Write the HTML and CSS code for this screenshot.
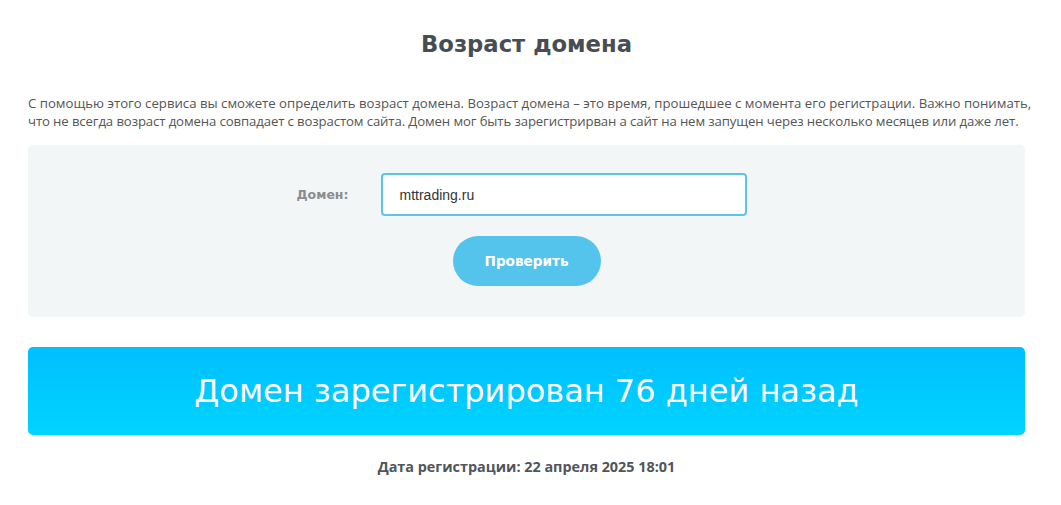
FILE: index.html
```html
<!DOCTYPE html>
<html lang="ru">
<head>
    <meta charset="UTF-8">
    <title>Возраст домена</title>
    <link rel="stylesheet" href="styles.css">
</head>
<body>
<div class="page">
    <h1 class="title">Возраст домена</h1>
    <p class="intro">С помощью этого сервиса вы сможете определить возраст домена. Возраст домена – это время, прошедшее с момента его регистрации. Важно понимать,<br><span class="tight">что не всегда возраст домена совпадает с возрастом сайта. Домен мог быть зарегистрирван а сайт на нем запущен через несколько месяцев или даже лет.</span></p>
    <form class="check" onsubmit="return false;">
        <div class="row">
            <label class="label" for="domain">Домен:</label>
            <input class="field" type="text" id="domain" value="mttrading.ru">
        </div>
        <button class="btn" type="submit">Проверить</button>
    </form>
    <div class="result">Домен зарегистрирован 76 дней назад</div>
    <div class="date">Дата регистрации: 22 апреля 2025 18:01</div>
</div>
</body>
</html>
```

FILE: styles.css
```css
body{
    margin:0;
    background:#fff;
    font-family:"Open Sans","DejaVu Sans",sans-serif;
    color:#4a4f55;
}
.page{
    width:997px;
    margin-left:28px;
    padding-top:28px;
}
.title{
    margin:0;
    text-align:center;
    font-family:"DejaVu Sans",sans-serif;
    font-size:22.7px;
    line-height:32px;
    font-weight:bold;
    color:#484d53;
}
.intro{
    margin:34px 0 0;
    font-size:13.2px;
    line-height:18px;
    color:#555;
    white-space:nowrap;
}
/* вторая строка в оригинале чуть уже */
.intro .tight{
    letter-spacing:-0.12px;
}
.check{
    margin-top:15px;
    background:#f3f6f7;
    border-radius:5px;
    padding:28px 0 31px;
    display:flex;
    flex-direction:column;
    align-items:center;
}
.row{
    display:flex;
    align-items:center;
    margin-left:-38px;
}
.label{
    width:80px;
    margin-right:32px;
    text-align:right;
    font-family:"DejaVu Sans",sans-serif;
    font-size:12.5px;
    font-weight:bold;
    color:#8a8d90;
}
.field{
    box-sizing:border-box;
    width:366px;
    height:43px;
    border:2px solid #5bc5e8;
    border-radius:4px;
    padding:0 17px;
    font-family:"Liberation Sans",Arial,sans-serif;
    font-size:14px;
    color:#333;
    background:#fff;
    outline:none;
}
.btn{
    margin-top:20px;
    width:148px;
    height:50px;
    border:0;
    border-radius:25px;
    background:#55c4ec;
    color:#fff;
    font-family:"DejaVu Sans",sans-serif;
    font-size:13.6px;
    font-weight:bold;
    cursor:pointer;
}
.result{
    margin-top:30px;
    height:88px;
    border-radius:5px;
    background:linear-gradient(#00bfff,#00d4ff);
    color:#fff;
    display:flex;
    align-items:center;
    justify-content:center;
    font-family:"DejaVu Sans",sans-serif;
    font-size:32px;
    font-weight:normal;
}
.date{
    margin-top:22px;
    text-align:center;
    font-family:"Open Sans",sans-serif;
    font-size:14.4px;
    font-weight:bold;
    color:#50555b;
}
```
